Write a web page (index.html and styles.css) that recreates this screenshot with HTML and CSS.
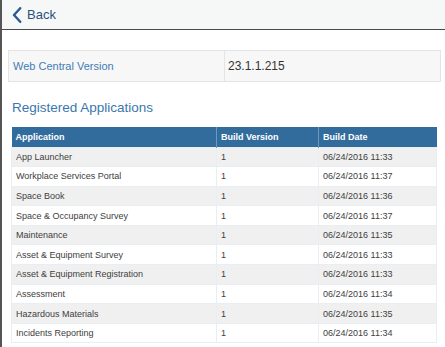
FILE: index.html
```
<!DOCTYPE html>
<html>
<head>
<meta charset="utf-8">
<link rel="stylesheet" href="styles.css">
</head>
<body>
<div class="frame">
  <header class="topbar">
    <a class="back">
      <svg class="chev" width="10" height="16" viewBox="0 0 10 16"><path d="M8.2 1.2 L2 8 L8.2 14.8" fill="none" stroke="#2b5a93" stroke-width="2.4" stroke-linecap="round" stroke-linejoin="round"/></svg>
      <span>Back</span>
    </a>
  </header>
  <main class="content">
    <div class="version">
      <div class="vlabel">Web Central Version</div>
      <div class="vvalue">23.1.1.215</div>
    </div>
    <h2 class="title">Registered Applications</h2>
    <table class="apps">
      <colgroup><col class="c1"><col class="c2"><col class="c3"></colgroup>
      <thead>
        <tr><th>Application</th><th>Build Version</th><th>Build Date</th></tr>
      </thead>
      <tbody>
        <tr><td>App Launcher</td><td>1</td><td>06/24/2016 11:33</td></tr>
        <tr><td>Workplace Services Portal</td><td>1</td><td>06/24/2016 11:37</td></tr>
        <tr><td>Space Book</td><td>1</td><td>06/24/2016 11:36</td></tr>
        <tr><td>Space &amp; Occupancy Survey</td><td>1</td><td>06/24/2016 11:37</td></tr>
        <tr><td>Maintenance</td><td>1</td><td>06/24/2016 11:35</td></tr>
        <tr><td>Asset &amp; Equipment Survey</td><td>1</td><td>06/24/2016 11:33</td></tr>
        <tr><td>Asset &amp; Equipment Registration</td><td>1</td><td>06/24/2016 11:33</td></tr>
        <tr><td>Assessment</td><td>1</td><td>06/24/2016 11:34</td></tr>
        <tr><td>Hazardous Materials</td><td>1</td><td>06/24/2016 11:35</td></tr>
        <tr><td>Incidents Reporting</td><td>1</td><td>06/24/2016 11:34</td></tr>
      </tbody>
    </table>
  </main>
</div>
</body>
</html>
```
FILE: styles.css
```
html, body {
  margin: 0;
  padding: 0;
  background: #fff;
  font-family: "Liberation Sans", Arial, sans-serif;
}
.frame {
  border-left: 2px solid #555;
  min-height: 347px;
  box-sizing: border-box;
}
.topbar {
  height: 29px;
  background: #f6f8f8;
  border-bottom: 1px solid #4a4a4a;
  display: flex;
  align-items: center;
  padding-left: 10px;
}
.back {
  display: flex;
  align-items: center;
  gap: 5px;
  color: #2b4f80;
  font-size: 13px;
}
.chev {
  display: block;
}
.content {
  padding: 20px 4px 0 6px;
}
.version {
  display: grid;
  grid-template-columns: 216px 1fr;
  height: 32px;
  box-sizing: border-box;
  border: 1px solid #e4e4e4;
  background: #f7f7f7;
}
.vlabel {
  color: #3f7cb6;
  font-size: 11px;
  padding-left: 4px;
  display: flex;
  align-items: center;
  border-right: 1px solid #e4e4e4;
}
.vvalue {
  color: #333;
  font-size: 12px;
  padding-left: 3px;
  display: flex;
  align-items: center;
}
.title {
  margin: 18px 0 0 4px;
  font-size: 13.5px;
  font-weight: normal;
  color: #3a77ae;
  line-height: 16px;
}
.apps {
  margin: 11px 0 0 3px;
  width: 425px;
  border-collapse: collapse;
  table-layout: fixed;
  font-size: 9px;
}
.c1 { width: 205px; }
.c2 { width: 102px; }
.c3 { width: 118px; }
.apps th {
  background: #326c9d;
  color: #fff;
  text-align: left;
  font-weight: bold;
  height: 20px;
  padding: 0 4px;
  border-left: 1px solid #6d97bd;
  box-sizing: border-box;
}
.apps th:first-child { border-left: none; }
.apps td {
  color: #404040;
  height: 19.6px;
  padding: 0 4px;
  border: 1px solid #e9eef3;
  box-sizing: border-box;
}
.apps tbody tr:nth-child(odd) td {
  background: #f0f0f0;
}
```
